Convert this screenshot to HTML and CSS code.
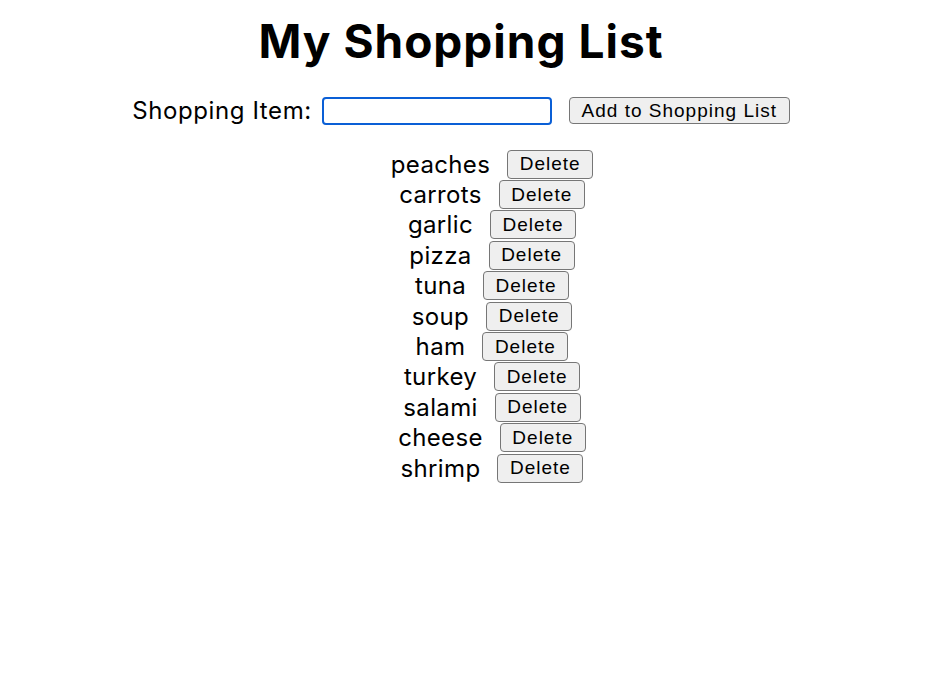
FILE: index.html
```html
<!DOCTYPE html>
<html>
<head>
<meta charset="utf-8">
<title>My Shopping List</title>
<link rel="stylesheet" href="styles.css">
</head>
<body>
<div class="app">
  <h1 class="title">My Shopping List</h1>
  <div class="form">
    <label class="label" for="item">Shopping Item:</label>
    <input class="input" id="item" type="text">
    <button class="btn add">Add to Shopping List</button>
  </div>
  <ul class="list">
    <li class="row"><span class="name">peaches</span><button class="btn del">Delete</button></li>
    <li class="row"><span class="name">carrots</span><button class="btn del">Delete</button></li>
    <li class="row"><span class="name">garlic</span><button class="btn del">Delete</button></li>
    <li class="row"><span class="name">pizza</span><button class="btn del">Delete</button></li>
    <li class="row"><span class="name">tuna</span><button class="btn del">Delete</button></li>
    <li class="row"><span class="name">soup</span><button class="btn del">Delete</button></li>
    <li class="row"><span class="name">ham</span><button class="btn del">Delete</button></li>
    <li class="row"><span class="name">turkey</span><button class="btn del">Delete</button></li>
    <li class="row"><span class="name">salami</span><button class="btn del">Delete</button></li>
    <li class="row"><span class="name">cheese</span><button class="btn del">Delete</button></li>
    <li class="row"><span class="name">shrimp</span><button class="btn del">Delete</button></li>
  </ul>
</div>
</body>
</html>
```
FILE: styles.css
```css
html, body {
  margin: 0;
  padding: 0;
  background: #fff;
}
body {
  font-family: Inter, "Noto Sans", sans-serif;
  color: #000;
}
.app {
  display: flex;
  flex-direction: column;
  align-items: center;
  padding-right: 8px;
}
.title {
  margin: 14px 0 0;
  font-size: 46px;
  font-weight: 700;
  line-height: 54px;
  letter-spacing: 1px;
}
.form {
  display: flex;
  align-items: center;
  margin-top: 28px;
}
.label {
  font-size: 24px;
  letter-spacing: 0.6px;
  margin-right: 10px;
}
.input {
  box-sizing: border-box;
  width: 230px;
  height: 28px;
  border: 2.5px solid #0a5fd6;
  border-radius: 4px;
  padding: 0;
  margin: 0 17px 0 0;
  outline: none;
}
.btn {
  font-family: "Liberation Sans", Arial, sans-serif;
  background: #efefef;
  border: 1.5px solid #767676;
  border-radius: 4px;
  color: #000;
  padding: 0;
  margin: 0;
  font-size: 19px;
  letter-spacing: 1px;
}
.add {
  box-sizing: border-box;
  width: 221px;
  height: 27px;
}
.list {
  list-style: none;
  margin: 24px 0 0;
  padding: 0 0 0 62px;
  display: flex;
  flex-direction: column;
  align-items: center;
}
.row {
  display: flex;
  align-items: center;
  height: 30.4px;
  gap: 17px;
}
.name {
  font-size: 24px;
  letter-spacing: 0.35px;
}
.del {
  box-sizing: border-box;
  width: 86px;
  height: 29px;
}
```
